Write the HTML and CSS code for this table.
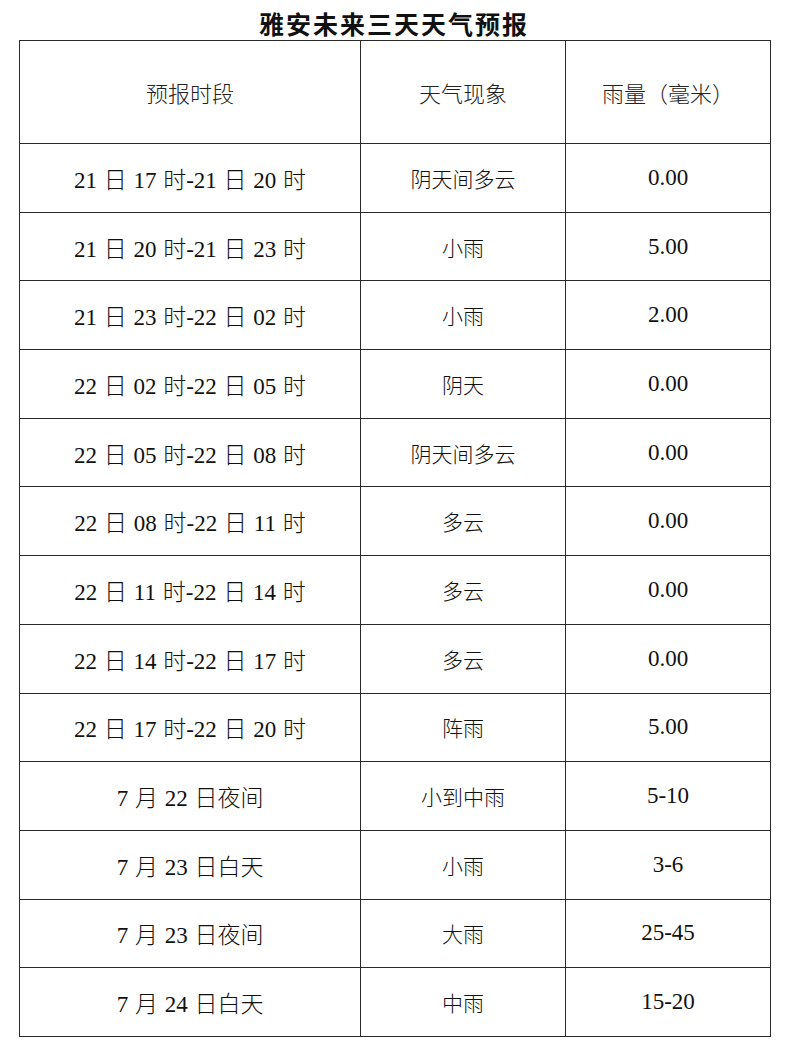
FILE: index.html
```html
<!DOCTYPE html>
<html lang="zh-CN">
<head>
<meta charset="utf-8">
<title>雅安未来三天天气预报</title>
<link rel="stylesheet" href="styles.css">
</head>
<body>
<div class="page">
  <h1 class="title">雅安未来三天天气预报</h1>
  <table class="forecast">
    <colgroup>
      <col class="c1"><col class="c2"><col class="c3">
    </colgroup>
    <thead>
      <tr><th>预报时段</th><th>天气现象</th><th>雨量（毫米）</th></tr>
    </thead>
    <tbody>
      <tr><td>21 日 17 时-21 日 20 时</td><td>阴天间多云</td><td>0.00</td></tr>
      <tr><td>21 日 20 时-21 日 23 时</td><td>小雨</td><td>5.00</td></tr>
      <tr><td>21 日 23 时-22 日 02 时</td><td>小雨</td><td>2.00</td></tr>
      <tr><td>22 日 02 时-22 日 05 时</td><td>阴天</td><td>0.00</td></tr>
      <tr><td>22 日 05 时-22 日 08 时</td><td>阴天间多云</td><td>0.00</td></tr>
      <tr><td>22 日 08 时-22 日 11 时</td><td>多云</td><td>0.00</td></tr>
      <tr><td>22 日 11 时-22 日 14 时</td><td>多云</td><td>0.00</td></tr>
      <tr><td>22 日 14 时-22 日 17 时</td><td>多云</td><td>0.00</td></tr>
      <tr><td>22 日 17 时-22 日 20 时</td><td>阵雨</td><td>5.00</td></tr>
      <tr><td>7 月 22 日夜间</td><td>小到中雨</td><td>5-10</td></tr>
      <tr><td>7 月 23 日白天</td><td>小雨</td><td>3-6</td></tr>
      <tr><td>7 月 23 日夜间</td><td>大雨</td><td>25-45</td></tr>
      <tr><td>7 月 24 日白天</td><td>中雨</td><td>15-20</td></tr>
    </tbody>
  </table>
</div>
</body>
</html>
```

FILE: styles.css
```css
html, body {
  margin: 0;
  padding: 0;
  background: #ffffff;
}

.page {
  width: 800px;
  padding: 0 0 0 19px;
  box-sizing: border-box;
  font-family: "Liberation Serif", "Noto Sans CJK SC", serif;
  color: #111111;
}

.title {
  margin: 0;
  width: 750px;
  height: 40px;
  box-sizing: border-box;
  padding-top: 8px;
  font-family: "Noto Sans CJK SC", sans-serif;
  font-size: 25px;
  font-weight: 700;
  line-height: 30px;
  text-align: center;
  letter-spacing: 2px;
  color: #111111;
}

.forecast {
  width: 751px;
  table-layout: fixed;
  border-collapse: collapse;
  font-size: 23px;
}

.c1 { width: 341px; }
.c2 { width: 205px; }
.c3 { width: 205px; }

.forecast th,
.forecast td {
  border: 1.5px solid #2a2a2a;
  padding: 0;
  text-align: center;
  vertical-align: middle;
  font-weight: 300;
  white-space: nowrap;
}

.forecast th {
  height: 102px;
  font-family: "Noto Sans CJK SC", sans-serif;
  font-size: 22px;
  color: #222222;
}

.forecast td {
  height: 67.7px;
  word-spacing: 1px;
}

.forecast td:nth-child(2) {
  font-family: "Noto Sans CJK SC", sans-serif;
  font-size: 21px;
}
```
